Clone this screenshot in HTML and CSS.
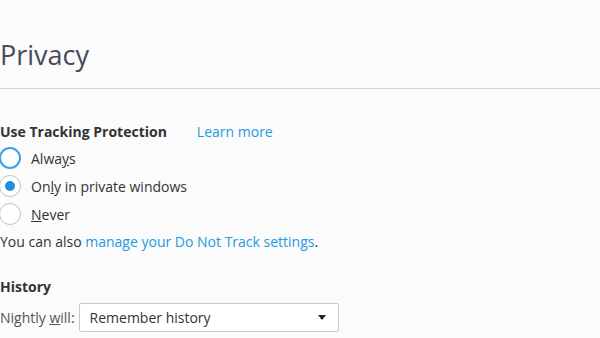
FILE: index.html
```html
<!DOCTYPE html>
<html>
<head>
    <meta charset="UTF-8">
    <title>Privacy</title>
    <link rel="stylesheet" href="styles.css">
</head>
<body>
    <div class="page">
        <h1 class="title">Privacy</h1>
        <hr class="divider">

        <section class="group">
            <div class="group-head">
                <span class="caption">Use Tracking Protection</span>
                <a class="link learn" href="#">Learn more</a>
            </div>
            <label class="radio-row">
                <span class="radio focused"></span>
                <span>Alwa<u>y</u>s</span>
            </label>
            <label class="radio-row">
                <span class="radio checked"></span>
                <span>On<u>l</u>y in private windows</span>
            </label>
            <label class="radio-row">
                <span class="radio"></span>
                <span><u>N</u>ever</span>
            </label>
            <p class="note">You can also <a class="link" href="#">manage your Do Not Track settings</a>.</p>
        </section>

        <section class="group history">
            <div class="caption">History</div>
            <div class="select-row">
                <span>Nightly <u>w</u>ill:</span>
                <div class="select">
                    <span>Remember history</span>
                    <span class="arrow"></span>
                </div>
            </div>
        </section>
    </div>
</body>
</html>
```

FILE: styles.css
```css
body {
    margin: 0;
    background-color: #fbfbfb;
    color: #333333;
    font-family: "Open Sans", sans-serif;
    font-size: 14px;
}
.page {
    padding-top: 29px;
}
.title {
    margin: 0;
    font-size: 27px;
    font-weight: 400;
    color: #454b57;
    line-height: 52px;
}
.divider {
    margin: 7px 0 0;
    border: none;
    border-top: 1px solid #d7d7db;
    height: 0;
}
.group {
    margin-top: 29px;
}
.caption {
    font-weight: 700;
    color: #333333;
}
.group-head {
    display: flex;
    align-items: center;
    height: 26px;
}
.learn {
    margin-left: 30px;
}
.link {
    color: #1d9ae5;
    text-decoration: none;
}
.radio-row {
    display: flex;
    align-items: center;
    height: 28px;
    color: #333333;
}
.radio {
    box-sizing: border-box;
    width: 22px;
    height: 22px;
    margin-left: -1px;
    margin-right: 10px;
    border: 1px solid #c1c1c1;
    border-radius: 50%;
    background-color: #ffffff;
    display: flex;
    align-items: center;
    justify-content: center;
}
.radio.focused {
    border: 2px solid #3aa3e3;
}
.radio.checked::after {
    content: "";
    width: 10px;
    height: 10px;
    border-radius: 50%;
    background-color: #1f90db;
}
.note {
    margin: 0;
    line-height: 28px;
}
.history {
    margin-top: 18px;
}
.history .caption {
    line-height: 26px;
}
.select-row {
    display: flex;
    align-items: center;
    margin-top: 3px;
    color: #555555;
}
.select {
    box-sizing: border-box;
    width: 260px;
    height: 29px;
    margin-left: 4px;
    border: 1px solid #c8c8c8;
    border-radius: 2px;
    background-color: #ffffff;
    display: flex;
    align-items: center;
    justify-content: space-between;
    padding: 0 12px 0 10px;
    color: #333333;
}
.arrow {
    width: 0;
    height: 0;
    border-left: 4px solid transparent;
    border-right: 4px solid transparent;
    border-top: 5px solid #222222;
}
```
